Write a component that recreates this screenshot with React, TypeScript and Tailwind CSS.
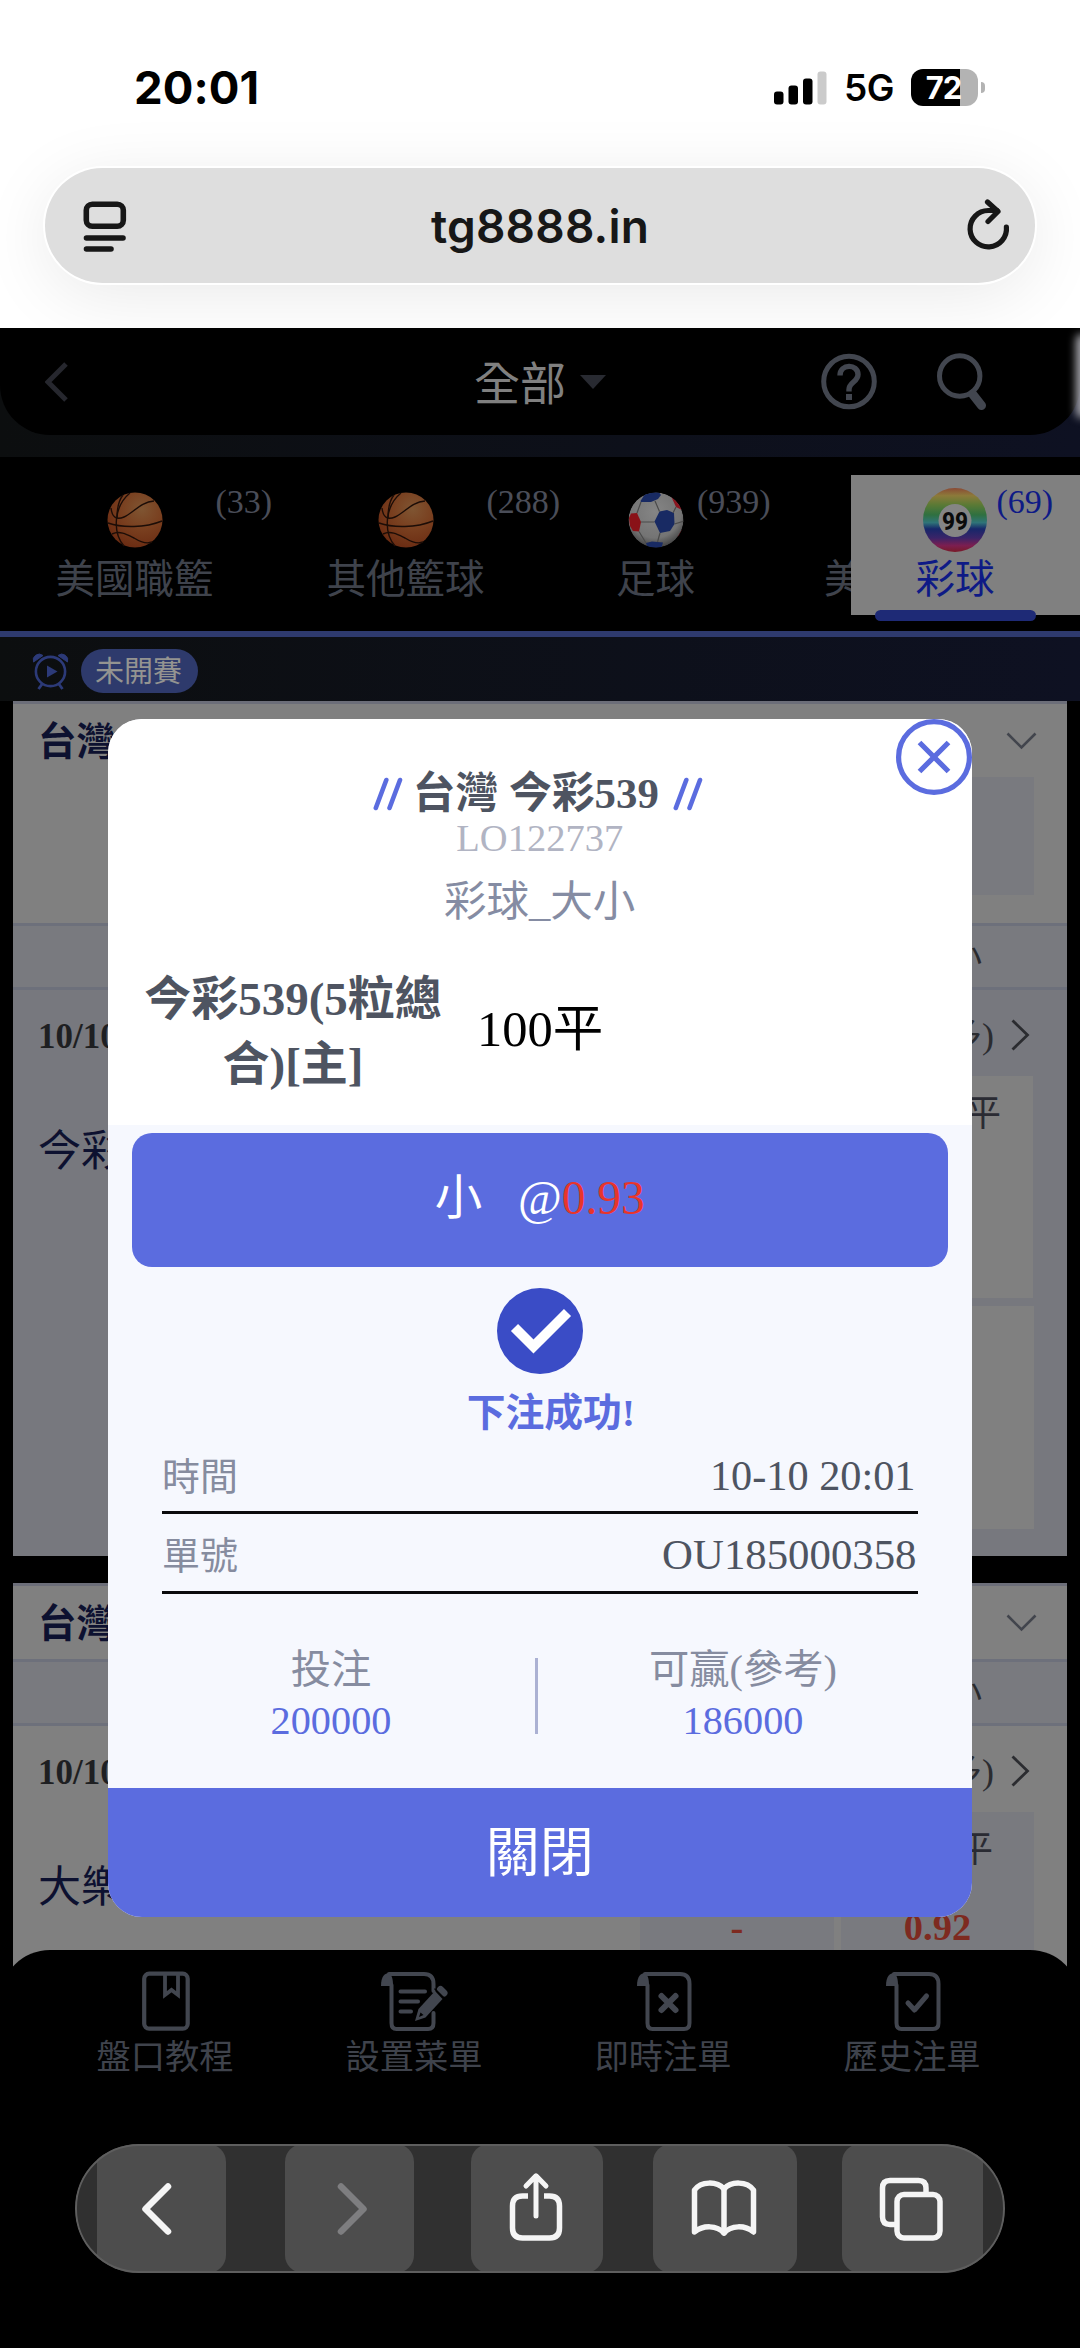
import type { ReactNode } from 'react'

type Tab = { name: string; count: string; width: string; icon: ReactNode }

const SERIF = "font-['Liberation_Serif','Noto_Sans_CJK_TC',serif]"

function Basketball({ id }: { id: string }) {
  return (
    <svg width="56" height="56" viewBox="0 0 56 56">
      <defs>
        <radialGradient id={id} cx="0.62" cy="0.3" r="0.75">
          <stop offset="0%" stopColor="#7F5532" />
          <stop offset="50%" stopColor="#793F1F" />
          <stop offset="100%" stopColor="#6A2B12" />
        </radialGradient>
      </defs>
      <circle cx="28" cy="28" r="27.5" fill={`url(#${id})`} />
      <g fill="none" stroke="#1C0D07" strokeWidth="1.4">
        <path d="M1 31C15 36 38 36 55 29" />
        <path d="M23 1C7 14 5 40 17 54" />
        <path d="M4 16C5 26 10 28 17 25C26 21 34 10 47 9" />
        <path d="M5 42C13 38 21 43 27 46C35 51 40 52 45 50" />
        <path d="M16 3C12 8 10 14 10 26" />
      </g>
    </svg>
  )
}

function SoccerBall() {
  return (
    <svg width="56" height="56" viewBox="0 0 56 56">
      <defs>
        <radialGradient id="soccer" cx="0.48" cy="0.35" r="0.68">
          <stop offset="0%" stopColor="#858585" />
          <stop offset="70%" stopColor="#747474" />
          <stop offset="100%" stopColor="#3C3C3C" />
        </radialGradient>
        <clipPath id="soccerClip">
          <circle cx="28" cy="28" r="27.5" />
        </clipPath>
      </defs>
      <g clipPath="url(#soccerClip)">
        <circle cx="28" cy="28" r="27.5" fill="url(#soccer)" />
        <path d="M12.500 9L17 2L30 -1L33 3L30 7L23 10L13 10Z" fill="#182A63" />
        <path d="M26.500 29.500L31.500 19.500L39 18L46 21L46.500 32L42 39L32 41Z" fill="#182A63" />
        <path d="M18 51L24 49.500L35 50.500L33 57H20Z" fill="#182A63" />
        <path d="M1 26L3 21.500L9 21L13 30L11 39.500L5 39L2 34Z" fill="#8A1218" />
        <path d="M43 4L52 12L54 18L48 15Z" fill="#8A1620" />
        <path d="M50 44L55 36L54 46L49 50Z" fill="#8A1620" />
        <g fill="none" stroke="#4A4A4A" strokeWidth="1.2">
          <path d="M27 9L31.500 19.500M13 10L9 21M13 30H26.500M32 41L29.500 50M11 39.500L18 51M46.500 32L56 29M45 21L48 15" />
        </g>
      </g>
    </svg>
  )
}

function LotteryBall() {
  return (
    <svg width="64" height="64" viewBox="0 0 64 64">
      <defs>
        <linearGradient id="lottery" x1="0" y1="0" x2="0" y2="1">
          <stop offset="0%" stopColor="#8A4A35" />
          <stop offset="12%" stopColor="#8C7A3A" />
          <stop offset="26%" stopColor="#5C7A35" />
          <stop offset="42%" stopColor="#2F7040" />
          <stop offset="54%" stopColor="#2F7478" />
          <stop offset="64%" stopColor="#17276A" />
          <stop offset="78%" stopColor="#3A2468" />
          <stop offset="90%" stopColor="#7C1E50" />
          <stop offset="100%" stopColor="#781A28" />
        </linearGradient>
      </defs>
      <circle cx="32" cy="32" r="32" fill="url(#lottery)" />
      <circle cx="32" cy="32.5" r="16.5" fill="#858585" />
      <text x="32" y="42" textAnchor="middle" fontFamily="Roboto, sans-serif" fontWeight="800" fontSize="26.5" textLength="26" lengthAdjust="spacingAndGlyphs" fill="#0B0B0B">99</text>
    </svg>
  )
}

const TABS: Tab[] = [
  { name: '美國職籃', count: '(33)', width: 'w-[269px]', icon: <Basketball id="bb1" /> },
  { name: '其他籃球', count: '(288)', width: 'w-[273px]', icon: <Basketball id="bb2" /> },
  { name: '足球', count: '(939)', width: 'w-[227px]', icon: <SoccerBall /> },
]

function StatusBar() {
  return (
    <div className="mt-[60px] flex h-[55px] items-center pl-[134px] font-['Inter',sans-serif] text-black">
      <span className="w-[640px] text-[45.500px] font-bold leading-none tracking-[0.1px]">20:01</span>
      <svg width="53" height="34" viewBox="0 0 53 34">
        <rect x="0" y="20.5" width="9.5" height="13" rx="3" />
        <rect x="14.5" y="14.5" width="9.5" height="19" rx="3" />
        <rect x="29" y="7.5" width="9.5" height="26" rx="3" />
        <rect x="43.5" y="0.5" width="9" height="33" rx="3" fill="#CBCBCB" />
      </svg>
      <span className="ml-[17px] w-[52px] text-[37px] font-semibold leading-none tracking-[-0.5px]">5G</span>
      <div className="ml-[15px] flex items-center gap-[3px]">
        <div className="flex h-[37px] w-[67px] items-center justify-center rounded-[12px] bg-[linear-gradient(90deg,#000_49px,#B3B3B3_49px)] pr-[2px] text-[31px] font-bold leading-none tracking-[-1px] text-white">
          72
        </div>
        <div className="h-[11px] w-[4px] rounded-r-full bg-[#B3B3B3]" />
      </div>
    </div>
  )
}

function AddressBar() {
  return (
    <div className="mx-[45px] mt-[53px] flex h-[115px] items-center justify-between rounded-full bg-[#DEDEDE] pl-[38px] pr-[24px] text-[#171717] shadow-[0_0_0_2px_#FFF,0_12px_70px_rgba(0,0,0,0.09)]">
      <svg width="44" height="52" viewBox="0 0 44 52" fill="none" stroke="currentColor" strokeWidth="5.6" strokeLinecap="round">
        <rect x="3.3" y="4.3" width="37" height="22" rx="6" />
        <path d="M3.5 38H40M3.5 49H28" />
      </svg>
      <span className="ml-[-12px] font-['Inter',sans-serif] text-[46px] font-semibold leading-none tracking-[0.2px]">tg8888.in</span>
      <svg width="46" height="54" viewBox="0 0 46 54" fill="none" stroke="currentColor" strokeWidth="5.2" strokeLinecap="round" strokeLinejoin="round">
        <path d="M41.4 28A18.2 18.2 0 1 1 23.2 11.5H32" />
        <path d="M22.5 3L33 12.5L23 22.5" />
      </svg>
    </div>
  )
}

function SiteHeader() {
  return (
    <div className="relative h-[129px] shrink-0 overflow-hidden bg-gradient-to-r from-[#0C0E0F] to-[#0E1122]">
      <div className="flex h-[107px] items-center rounded-b-[50px] bg-black pl-[45px] text-[#42464F]">
        <svg width="24" height="40" viewBox="0 0 24 40" fill="none" stroke="#26272E" strokeWidth="5">
          <path d="M21 2L3 20L21 38" />
        </svg>
        <span className="ml-[405px] mt-[6px] text-[46px] leading-none text-[#808080]">全部</span>
        <div className="ml-[14px] h-0 w-0 border-x-[13px] border-t-[14px] border-x-transparent border-t-[#282A31]" />
        <svg className="ml-[215px]" width="56" height="57" viewBox="0 0 56 57" fill="none" stroke="currentColor" strokeWidth="5">
          <circle cx="28" cy="28.5" r="25.3" />
          <path d="M19 22.5C19 10.5 37 10.5 37 21.5C37 29 28 29 28 36.5V38.5" strokeWidth="5.4" />
          <path d="M28 41V47" strokeWidth="6" />
        </svg>
        <svg className="ml-[60px]" width="50" height="57" viewBox="0 0 50 57" fill="none" stroke="currentColor" strokeWidth="5">
          <circle cx="22.7" cy="23" r="20.2" />
          <path d="M35.5 41L44.5 52.5" strokeWidth="9" strokeLinecap="round" />
        </svg>
      </div>
      <div className="absolute -right-[8px] top-[6px] h-[84px] w-[12px] rounded-full bg-[#A8A8AE] blur-[4px]" />
    </div>
  )
}

function SportTabs() {
  return (
    <div className="relative flex h-[180px] shrink-0 overflow-hidden border-b-[6px] border-[#2E3A6E] bg-black text-[#3F434C]">
      {TABS.map((tab) => (
        <div key={tab.name} className={`${tab.width} flex shrink-0 flex-col items-center pt-[35px]`}>
          {tab.icon}
          <div className="relative mt-[10px] text-[39.5px] leading-[44px]">
            {tab.name}
            <span className="absolute left-full top-[-78px] ml-[2px] text-[34px] leading-[44px] text-[#4A4D58]">{tab.count}</span>
          </div>
        </div>
      ))}
      <div className="shrink-0 pl-[55px] pt-[101px] text-[39.5px] leading-[44px]">美</div>
      <div className="absolute left-[851px] top-[18px] flex h-[140px] w-[229px] flex-col items-center bg-[#808080] pr-[21px] pt-[13px] text-[#0E1A86]">
        <LotteryBall />
        <div className="relative mt-[6px] text-[39.5px] leading-[44px]">
          彩球
          <span className="absolute left-full top-[-78px] ml-[2px] text-[34px] leading-[44px]">(69)</span>
        </div>
        <div className="absolute bottom-[-6px] left-[24px] h-[11px] w-[161px] rounded-full bg-[#1E2A76]" />
      </div>
    </div>
  )
}

function PendingStrip() {
  return (
    <div className="flex h-[64px] shrink-0 items-center bg-gradient-to-r from-[#0C0E0F] to-[#0E1122] pl-[32px] pt-[4px]">
      <svg width="37" height="38" viewBox="0 0 37 38" fill="none" stroke="#2C3A78">
        <circle cx="18.5" cy="19.5" r="14.6" strokeWidth="2.6" />
        <path d="M10.500 31.500L6.500 37M26.500 31.500L30.500 37" strokeWidth="2.8" />
        <path d="M15 13.500L25.500 19.500L15 25.500Z" fill="#2C3A78" stroke="none" />
        <path d="M1.500 10A6 6 0 0 1 11 3.500ZM35.500 10A6 6 0 0 0 26 3.500Z" fill="#2C3A78" strokeWidth="1" />
      </svg>
      <div className="ml-[12px] flex h-[44px] w-[117px] items-center justify-center rounded-full bg-[#2E3A6C] text-[29px] text-[#949491]">
        <span className="pr-[2px] pt-[2px] leading-none">未開賽</span>
      </div>
    </div>
  )
}

function CardHeading({ tall = false }: { tall?: boolean }) {
  return (
    <div className={`${tall ? 'h-[219px]' : 'h-[73px]'} flex items-start justify-between bg-[#808080] pl-[25px] pr-[30px]`}>
      <span className="mt-[15px] text-[38.5px] font-bold leading-[46px] text-[#0D1130]">台灣</span>
      <div className="flex flex-col items-end">
        <svg className="mt-[28px]" width="31" height="18" viewBox="0 0 31 18" fill="none" stroke="#42454D" strokeWidth="2.6">
          <path d="M1.500 1.500L15.500 15.500L29.500 1.500" />
        </svg>
        {tall && <div className="mr-[3px] mt-[27px] h-[118px] w-[394px] bg-[#797A7F]" />}
      </div>
    </div>
  )
}

function MarketHeader() {
  return (
    <div className="flex h-[64px] items-center justify-end border-t-[3px] border-[#6D707B] bg-[#797A7F] pr-[85px] text-[34px] leading-none text-[#2A2B2E]">
      大小
    </div>
  )
}

function MatchRow({ date }: { date: string }) {
  return (
    <div className="flex h-[86px] items-center justify-between pl-[25px] pr-[37px] pt-[6px] leading-none">
      <span className="text-[35px] font-bold text-[#1E1F22]">{date}</span>
      <span className="flex items-center text-[36px] text-[#2B2C30]">
        (更多)
        <svg className="ml-[17px] mt-[-2px]" width="19" height="32" viewBox="0 0 19 32" fill="none" stroke="currentColor" strokeWidth="2.8">
          <path d="M1.500 1.500L16.500 16L1.500 30.500" />
        </svg>
      </span>
    </div>
  )
}

function ActionSlash() {
  return (
    <svg width="30" height="34" viewBox="0 0 30 34" stroke="#5B6CDF" strokeWidth="4.600" strokeLinecap="round">
      <path d="M2.800 31L13.300 3M16.500 31L27 3" />
    </svg>
  )
}

function BetDialog() {
  return (
    <div className="absolute left-[108px] top-[719px] flex h-[1198px] w-[863.500px] flex-col overflow-hidden rounded-[34px] bg-[#F6F8FE]">
      <div className="flex h-[406px] shrink-0 flex-col bg-white">
        <div className="mt-[50px] flex h-[50px] items-center justify-center pr-[4px] text-[42.800px] font-bold leading-none text-[#4E5461]">
          <ActionSlash />
          <span className="ml-[10px] mr-[14px]">台灣 今彩539</span>
          <ActionSlash />
        </div>
        <div className="mt-[-1px] text-center text-[38.5px] leading-[40px] text-[#B1B4C3]">LO122737</div>
        <div className="mt-[18px] text-center text-[42.500px] leading-[52px] text-[#858CA3]">彩球_大小</div>
        <div className="mt-[39px] flex items-center">
          <div className="ml-[30px] w-[310px] text-center text-[47px] font-bold leading-[65px] text-[#4E5461]">今彩539(5粒總合)[主]</div>
          <div className="mb-[5px] ml-[29px] text-[50.500px] leading-none text-black">100平</div>
        </div>
      </div>

      <div className="mx-[24px] mt-[8px] flex h-[134px] shrink-0 items-center justify-center whitespace-pre rounded-[20px] bg-[#5B6CDF] pb-[3px] text-[47.500px] leading-none text-white">
        小{'   '}@<span className="text-[#E8352B]">0.93</span>
      </div>

      <svg className="mt-[21px] shrink-0 self-center" width="86" height="86" viewBox="0 0 86 86">
        <circle cx="43" cy="43" r="43" fill="#3A4CC6" />
        <path d="M17.500 39.500L36.500 58.500L70.500 24.500" fill="none" stroke="#FFF" strokeWidth="10" />
      </svg>
      <div className="mt-[14px] pl-[22px] text-center text-[38.800px] font-bold leading-[50px] text-[#5B6CDF]">下注成功!</div>

      <div className="mx-[54px] mt-[8px] leading-none text-[#4E5461]">
        <div className="flex h-[68px] items-center justify-between border-b-[3px] border-[#0A0A0C] pb-[4px] pr-[2px]">
          <span className="text-[38px] text-[#868C9F]">時間</span>
          <span className="text-[42.300px]">10-10 20:01</span>
        </div>
        <div className="flex h-[80px] items-center justify-between border-b-[3px] border-[#0A0A0C] pr-px pt-[6px]">
          <span className="text-[38px] text-[#868C9F]">單號</span>
          <span className="text-[42.800px]">OU185000358</span>
        </div>
      </div>

      <div className="mt-[50px] flex h-[144px] shrink-0 text-center text-[40.300px] text-[#5B6CDF]">
        <div className="w-[446px]">
          <div className="leading-[52px] text-[#868CA0]">投注</div>
          <div className="leading-[50px]">200000</div>
        </div>
        <div className="-ml-[19px] mt-[14px] h-[76px] w-[3px] bg-[#ABB1D3]" />
        <div className="ml-[12px] w-[386px]">
          <div className="leading-[52px] text-[#868CA0]">可贏(參考)</div>
          <div className="leading-[50px]">186000</div>
        </div>
      </div>

      <button type="button" className="flex w-full flex-1 items-center justify-center bg-[#5B6CDF] pt-[3px] text-[54px] leading-none text-white">
        關閉
      </button>

      <button type="button" aria-label="關閉" className="absolute right-0 top-0">
        <svg width="76" height="76" viewBox="0 0 76 76" fill="none" stroke="#5B6CDF" strokeWidth="5.200">
          <circle cx="38" cy="38" r="35.400" fill="#FFF" />
          <path d="M23.500 23.500L52.500 52.500M52.500 23.500L23.500 52.500" />
        </svg>
      </button>
    </div>
  )
}

function ScrollPaper({ children }: { children?: ReactNode }) {
  return (
    <svg width="68" height="60" viewBox="0 0 68 60" fill="none" stroke="#42464F" strokeWidth="4" strokeLinecap="round" strokeLinejoin="round">
      <path d="M8 3H43Q52.500 3 52.500 13V52Q52.500 58 47 58H15.500Q10.500 58 10.500 52V14" />
      <path d="M0 15C0 5 4 2 8 2C11 4 12 8 12 15Z" fill="#42464F" stroke="none" />
      {children}
    </svg>
  )
}

const FOOTER: { label: string; icon: ReactNode }[] = [
  {
    label: '盤口教程',
    icon: (
      <svg width="48" height="60" viewBox="0 0 48 60" fill="none" stroke="#42464F" strokeWidth="4.200">
        <rect x="2.200" y="2.700" width="43.500" height="55" rx="5" />
        <path d="M23 3V24L29.500 19L36 24V3" strokeWidth="3.800" />
      </svg>
    ),
  },
  {
    label: '設置菜單',
    icon: (
      <svg width="68" height="60" viewBox="0 0 68 60" fill="none" stroke="#42464F" strokeWidth="4" strokeLinecap="round" strokeLinejoin="round">
        <path d="M8 3H43Q52.500 3 52.500 13V20M52.500 42V52Q52.500 58 47 58H15.500Q10.500 58 10.500 52V14" />
        <path d="M0 15C0 5 4 2 8 2C11 4 12 8 12 15Z" fill="#42464F" stroke="none" />
        <path d="M19.500 20.500H44M19.500 30.500H37M19.500 40.500H30" />
        <path d="M54 20L61.500 28L44.500 46.500L34 50L37.500 38Z" fill="#42464F" stroke="none" />
        <path d="M39.500 41.500L38 46L42.500 44Z" fill="#000" stroke="none" />
        <path d="M59.500 18.500L63 22" strokeWidth="7" />
        <path d="M54 18L64 28" stroke="#000" strokeWidth="1.500" />
      </svg>
    ),
  },
  { label: '即時注單', icon: <ScrollPaper><path d="M24.500 25L38.500 39M38.500 25L24.500 39" strokeWidth="6" /></ScrollPaper> },
  { label: '歷史注單', icon: <ScrollPaper><path d="M22 32L28.500 39L40.500 25" strokeWidth="5" /></ScrollPaper> },
]

function FooterNav() {
  return (
    <div className="relative -mt-[50px] flex h-[194px] shrink-0 rounded-t-[50px] bg-black pl-[41px] pt-[21px]">
      {FOOTER.map((item, i) => (
        <div key={item.label} className="flex w-[249px] flex-col items-center text-[34.300px] leading-[46px] text-[#3F434C]">
          <div className={i > 1 ? 'pl-[14px]' : ''}>{item.icon}</div>
          <span className="mt-[3px] pr-px">{item.label}</span>
        </div>
      ))}
    </div>
  )
}

function BrowserToolbar() {
  const button = 'flex h-full shrink-0 items-center justify-center rounded-[18px] bg-[#4D4D4D]'
  return (
    <div className="relative mx-[75px] h-[129px] shrink-0 overflow-hidden rounded-[64px] bg-[#303030]">
      <div className="flex h-full pl-[22px] text-[#F5F5F5]">
        <div className={`${button} w-[129px] rounded-l-none`}>
          <svg className="mr-[10px]" width="32" height="54" viewBox="0 0 32 54" fill="none" stroke="currentColor" strokeWidth="6.500" strokeLinecap="round" strokeLinejoin="round">
            <path d="M27 4.500L4.500 27L27 49.500" />
          </svg>
        </div>
        <div className={`${button} ml-[59px] w-[129px]`}>
          <svg className="ml-[5px]" width="32" height="54" viewBox="0 0 32 54" fill="none" stroke="#7E7E80" strokeWidth="6.500" strokeLinecap="round" strokeLinejoin="round">
            <path d="M5 4.500L27.500 27L5 49.500" />
          </svg>
        </div>
        <div className={`${button} ml-[57px] w-[132px]`}>
          <svg className="mb-[3px] mr-[2px]" width="54" height="70" viewBox="0 0 54 70" fill="none" stroke="currentColor" strokeWidth="5.500" strokeLinejoin="round">
            <path d="M19 24H13.500Q3.500 24 3.500 34V56Q3.500 66 13.500 66H40.500Q50.500 66 50.500 56V34Q50.500 24 40.500 24H35" />
            <path d="M27 44V4.500M17 14L27 3.800L37 14" strokeLinecap="round" strokeWidth="5" />
          </svg>
        </div>
        <div className={`${button} ml-[50px] w-[144px]`}>
          <svg className="ml-[-2px]" width="68" height="58" viewBox="0 0 68 58" fill="none" stroke="currentColor" strokeWidth="5.500" strokeLinecap="round" strokeLinejoin="round">
            <path d="M34 9C27 1 11 1 4.500 10V52C13 45 27 45 34 53C41 45 55 45 63.500 52V10C57 1 41 1 34 9Z" />
            <path d="M34 9V53" />
          </svg>
        </div>
        <div className={`${button} ml-[45px] w-[141px] rounded-r-none`}>
          <svg className="ml-[-3px]" width="64" height="64" viewBox="0 0 64 64" fill="none" stroke="currentColor" strokeWidth="5.500" strokeLinejoin="round">
            <rect x="18" y="17.500" width="43" height="43.500" rx="7" />
            <path d="M17 47.500H11Q3.500 47.500 3.500 40V11Q3.500 3.500 11 3.500H39.500Q47 3.500 47 11V17" />
          </svg>
        </div>
      </div>
      <div className="pointer-events-none absolute inset-0 rounded-[64px] border-2 border-[#5E5E5E]" />
    </div>
  )
}

export default function App() {
  return (
    <main className={`relative flex h-[2348px] w-[1080px] flex-col overflow-hidden bg-black ${SERIF}`}>
      <div className="h-[328px] shrink-0 overflow-hidden bg-white">
        <StatusBar />
        <AddressBar />
      </div>
      <SiteHeader />
      <SportTabs />
      <PendingStrip />

      <div className="h-[1299px] shrink-0 overflow-hidden px-[13px]">
        <section className="border-t-[3px] border-[#6C6E79]">
          <CardHeading tall />
          <MarketHeader />
          <div className="h-[569px] border-t-[3px] border-[#6D707B] bg-[#77787E]">
            <MatchRow date="10/10" />
            <div className="flex justify-between pl-[25px] pr-[33px]">
              <span className="mt-[50px] text-[43px] leading-[52px] text-[#0D1130]">今彩</span>
              <div className="grid grid-cols-2 gap-x-[7px] gap-y-[8px]">
                <div className="h-[222px] w-[194px] bg-[#808080]" />
                <div className="flex h-[222px] w-[193px] justify-end bg-[#808080] pr-[32px] pt-[18px] text-[36px] leading-[40px] text-[#2A2B33]">平</div>
                <div className="h-[223px] bg-[#808080]" />
                <div className="h-[223px] bg-[#808080]" />
              </div>
            </div>
          </div>
        </section>

        <section className="mt-[27px] border-t-[3px] border-[#6C6E79]">
          <CardHeading />
          <MarketHeader />
          <div className="h-[280px] border-t-[3px] border-[#6D707B] bg-[#808080]">
            <MatchRow date="10/10" />
            <div className="flex justify-between pl-[25px] pr-[33px]">
              <span className="mt-[50px] text-[43px] leading-[52px] text-[#0D1130]">大樂</span>
              <div className="flex gap-[7px] text-[38.500px] font-bold text-[#7E2A20]">
                <div className="h-[190px] w-[194px] bg-[#797A7F] pt-[95px] text-center leading-[40px]">-</div>
                <div className="h-[190px] w-[193px] bg-[#797A7F] pt-[18px] text-center leading-[40px]">
                  <div className="pr-[41px] text-right text-[36px] font-normal text-[#2A2B33]">平</div>
                  <div className="mt-[37px]">0.92</div>
                </div>
              </div>
            </div>
          </div>
        </section>
      </div>

      <FooterNav />
      <BrowserToolbar />
      <BetDialog />
    </main>
  )
}
